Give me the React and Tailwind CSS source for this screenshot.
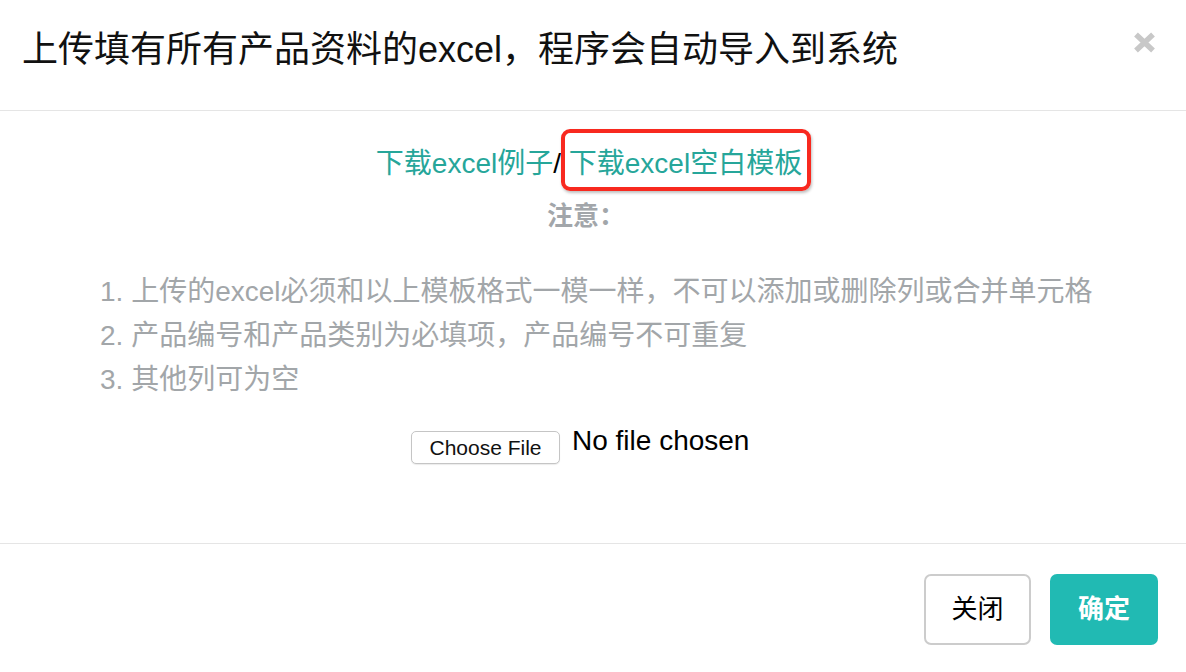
const FONT = "font-['Liberation_Sans','Noto_Sans_CJK_SC',sans-serif]";

const notes = [
  '1. 上传的excel必须和以上模板格式一模一样，不可以添加或删除列或合并单元格',
  '2. 产品编号和产品类别为必填项，产品编号不可重复',
  '3. 其他列可为空',
];

function CloseIcon() {
  return (
    <svg width="23" height="21" viewBox="0 0 23 21" className="mt-[2px]">
      <path d="M3 2.5 L20 18.5 M20 2.5 L3 18.5" stroke="#c8c8c8" strokeWidth="5.5" strokeLinecap="butt" />
    </svg>
  );
}

export default function App() {
  return (
    <div className={`w-[1186px] h-[672px] bg-white flex flex-col text-[#111] ${FONT}`}>
      {/* header */}
      <div className="h-[111px] shrink-0 border-b border-[#e5e5e5] pl-[22px] pr-[30px] pt-[30px] flex justify-between items-start">
        <h4 className="text-[36px] leading-[40px]">上传填有所有产品资料的excel，程序会自动导入到系统</h4>
        <button>
          <CloseIcon />
        </button>
      </div>

      {/* body */}
      <div className="flex-1 flex flex-col items-center pt-[35px]">
        <div className="-ml-[8px] text-[28px] leading-[36px] text-[#26a69a] whitespace-pre">
          <a>下载excel例子</a>
          <span className="text-black">/ </span>
          <span className="relative">
            <a>下载excel空白模板</a>
            <span className="absolute -left-[8px] -right-[9px] -top-[19px] -bottom-[12px] border-4 border-[#f8291f] rounded-[9px] shadow-[1px_2px_3px_rgba(0,0,0,0.25)]" />
          </span>
        </div>
        <div className="mt-[18px] -ml-[14px] text-[26px] leading-[32px] font-bold text-[#a2a6aa]">注意：</div>
        <div className="self-stretch pl-[100px] mt-[38px] text-[28px] leading-[44px] text-[#a2a6a9]">
          {notes.map((n) => (
            <div key={n}>{n}</div>
          ))}
        </div>
        <div className="self-start ml-[411px] mt-[29px] flex items-start">
          <button className="h-[33px] w-[149px] border border-[#c5c5c5] rounded-[5px] bg-white text-[21px] leading-[31px] text-[#111] shadow-[0_1px_1px_rgba(0,0,0,0.08)]">
            Choose File
          </button>
          <span className="ml-[12px] -mt-[6px] text-[28px] leading-[32px] text-black">No file chosen</span>
        </div>
      </div>

      {/* footer */}
      <div className="h-[129px] shrink-0 border-t border-[#e5e5e5] flex justify-end items-start pt-[30px] pr-[28px] gap-[19px]">
        <button className="w-[107px] h-[71px] border-2 border-[#cccccc] rounded-[7px] bg-white text-[26px] text-black">
          关闭
        </button>
        <button className="w-[108px] h-[71px] rounded-[7px] bg-[#21bab3] text-[26px] font-bold text-white">
          确定
        </button>
      </div>
    </div>
  );
}
